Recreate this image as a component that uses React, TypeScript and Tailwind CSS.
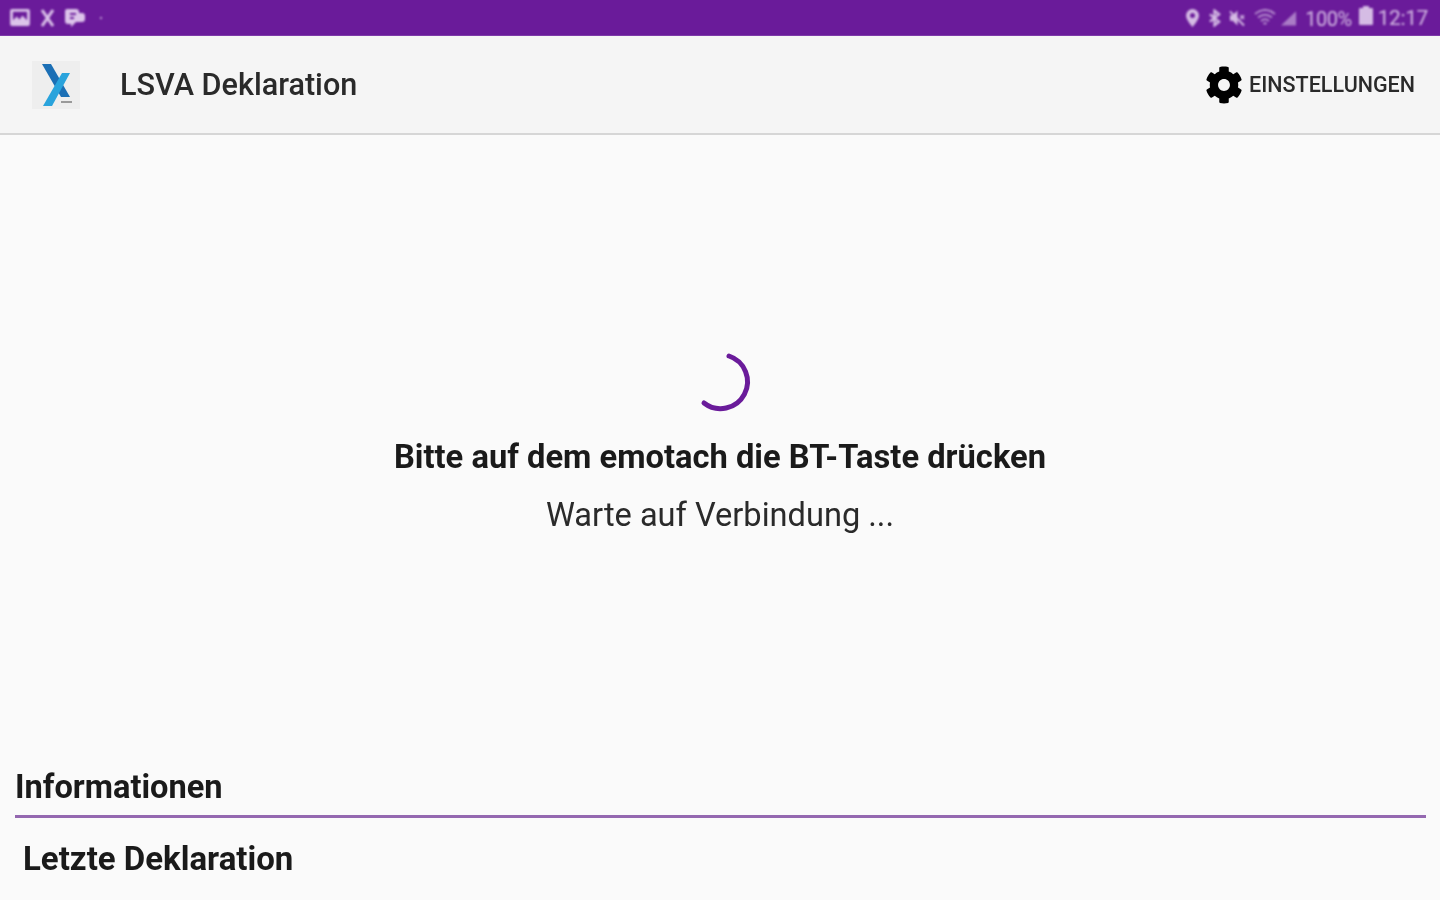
import { FaCog } from 'react-icons/fa';

//상태바 왼쪽 아이콘
const LeftStatusIcons = () => (
  <div className="flex items-center text-[#dcc4ea] blur-[1px]">
    <svg className="ml-[10px] w-[20px] h-[17px]" viewBox="0 0 21 18" fill="currentColor">
      <path fillRule="evenodd" d="M2 0h17a2 2 0 0 1 2 2v14a2 2 0 0 1-2 2H2a2 2 0 0 1-2-2V2a2 2 0 0 1 2-2zm1 3v9l4-4 3 3 3-4 5 5V3z" />
    </svg>
    <svg className="ml-[10px] w-[15px] h-[18px]" viewBox="0 0 15 18" fill="none" stroke="currentColor" strokeWidth="3">
      <path d="M2 1l11 16M13 1L2 17" />
    </svg>
    <svg className="ml-[9px] w-[21px] h-[20px]" viewBox="0 0 21 20" fill="currentColor">
      <path fillRule="evenodd" d="M3 1h9a3 3 0 0 1 3 3v1h3a3 3 0 0 1 3 3v3a3 3 0 0 1-3 3h-6l-5 5v-3H4a3 3 0 0 1-3-3V3a2 2 0 0 1 2-2zm3 4v2h6V5zm0 4v2h4V9z" />
    </svg>
    <div className="ml-[15px] w-[2px] h-[2px] rounded-full bg-[#dcc4ea]" />
  </div>
);

//상태바 오른쪽 아이콘
const RightStatusIcons = () => (
  <div className="flex items-center text-[#d5bce4] blur-[0.8px]">
    <svg className="w-[13px] h-[18px]" viewBox="0 0 13 18" fill="currentColor">
      <path fillRule="evenodd" d="M6.500 0A6.500 6.500 0 0 0 0 6.500C0 11 6.500 18 6.500 18S13 11 13 6.500A6.500 6.500 0 0 0 6.500 0zm0 4a2.500 2.500 0 1 1 0 5 2.500 2.500 0 0 1 0-5z" />
    </svg>
    <svg className="ml-[9px] w-[13px] h-[18px]" viewBox="0 0 14 18" fill="none" stroke="currentColor" strokeWidth="2.400">
      <path d="M2 5l10 8-5 4V1l5 4-10 8" />
    </svg>
    <svg className="ml-[8px] w-[16px] h-[18px]" viewBox="0 0 17 18" fill="currentColor">
      <path d="M1 6h3l5-5v16l-5-5H1z" />
      <path d="M1 2l15 15" stroke="currentColor" strokeWidth="2" />
      <path d="M12 6l4 4M16 6l-4 4" stroke="currentColor" strokeWidth="1.500" />
    </svg>
    <svg className="ml-[9px] w-[22px] h-[18px] opacity-70" viewBox="0 0 22 18" fill="none" stroke="currentColor" strokeWidth="2">
      <path d="M1 5Q11-3 21 5M4 8.500Q11 3 18 8.500M7 12Q11 8.500 15 12M9.500 15Q11 13.500 12.500 15" />
    </svg>
    <svg className="ml-[3px] w-[18px] h-[18px] opacity-60" viewBox="0 0 19 18" fill="currentColor">
      <path d="M18 2v15H2z" />
    </svg>
    <span className="ml-[8px] pt-[2px] text-[20px] leading-none tracking-[-0.5px]">100%</span>
    <svg className="ml-[7px] w-[14px] h-[19px] -mt-[4px]" viewBox="0 0 14 19" fill="currentColor">
      <path d="M4 0h6v2h3a1 1 0 0 1 1 1v15a1 1 0 0 1-1 1H1a1 1 0 0 1-1-1V3a1 1 0 0 1 1-1h3z" />
    </svg>
    <span className="ml-[5px] mr-[12px] pt-[2px] text-[21px] leading-none tracking-[-0.4px]">12:17</span>
  </div>
);

const App = () => {
  return (
    <div className="flex flex-col h-screen overflow-hidden bg-[#fafafa] font-['Roboto',sans-serif] text-[#1c1c1c]">
      {/* 상태바 */}
      <div className="flex items-center justify-between h-[36px] shrink-0 bg-[#6a1b9a] border-b border-[#7d3aa8]">
        <LeftStatusIcons />
        <RightStatusIcons />
      </div>

      {/* 툴바 */}
      <div className="flex items-center justify-between h-[99px] shrink-0 bg-[#f5f5f5] border-b-[2px] border-[#d6d6d6]">
        <div className="flex items-center blur-[0.7px]">
          <div className="flex items-center justify-center ml-[32px] w-[48px] h-[48px] bg-[#eeeeee]">
            <svg className="w-[36px] h-[46px]" viewBox="0 0 36 46">
              <path d="M4 2h9l19 33h-9z" fill="#1b6fb5" />
              <path d="M32 11h-8L5 44h9z" fill="#29a3dc" />
              <path d="M23 39h11v2H23z" fill="#9a9a9a" />
            </svg>
          </div>
          <span className="ml-[40px] pt-[2px] text-[30.600px] font-medium leading-none text-[#2a2a2a]">LSVA Deklaration</span>
        </div>
        <div className="flex items-center mr-[25px] blur-[0.7px]">
          <FaCog className="w-[38px] h-[38px] text-black" />
          <span className="ml-[6px] text-[21.500px] font-medium leading-none text-[#2a2a2a]">EINSTELLUNGEN</span>
        </div>
      </div>

      {/* 연결 대기 영역 */}
      <div className="flex flex-col items-center pt-[215px] shrink-0">
        <svg className="w-[60px] h-[64px] ml-[8px] blur-[0.5px]" viewBox="0 0 60 64" fill="none">
          <path d="M35 6A27 27 0 1 1 10 53" stroke="#6a1b9a" strokeWidth="5" strokeLinecap="round" />
        </svg>
        <div className="mt-[23px] text-[32.700px] font-bold leading-[40px] text-[#1a1a1a] blur-[0.7px]">Bitte auf dem emotach die BT-Taste drücken</div>
        <div className="mt-[18px] text-[32.600px] leading-[40px] text-[#2a2a2a] blur-[0.7px]">Warte auf Verbindung ...</div>
      </div>

      {/* 정보 영역 */}
      <div className="mt-auto pl-[15px] pr-[14px] shrink-0">
        <div className="text-[32.600px] font-bold leading-[42px] text-[#1a1a1a] blur-[0.7px]">Informationen</div>
        <div className="mt-[7px] h-[3px] bg-[#9468b0]" />
        <div className="mt-[21px] mb-[21px] ml-[8px] text-[33px] font-bold leading-[40px] text-[#1a1a1a] blur-[0.7px]">Letzte Deklaration</div>
      </div>
    </div>
  );
};

export default App;
